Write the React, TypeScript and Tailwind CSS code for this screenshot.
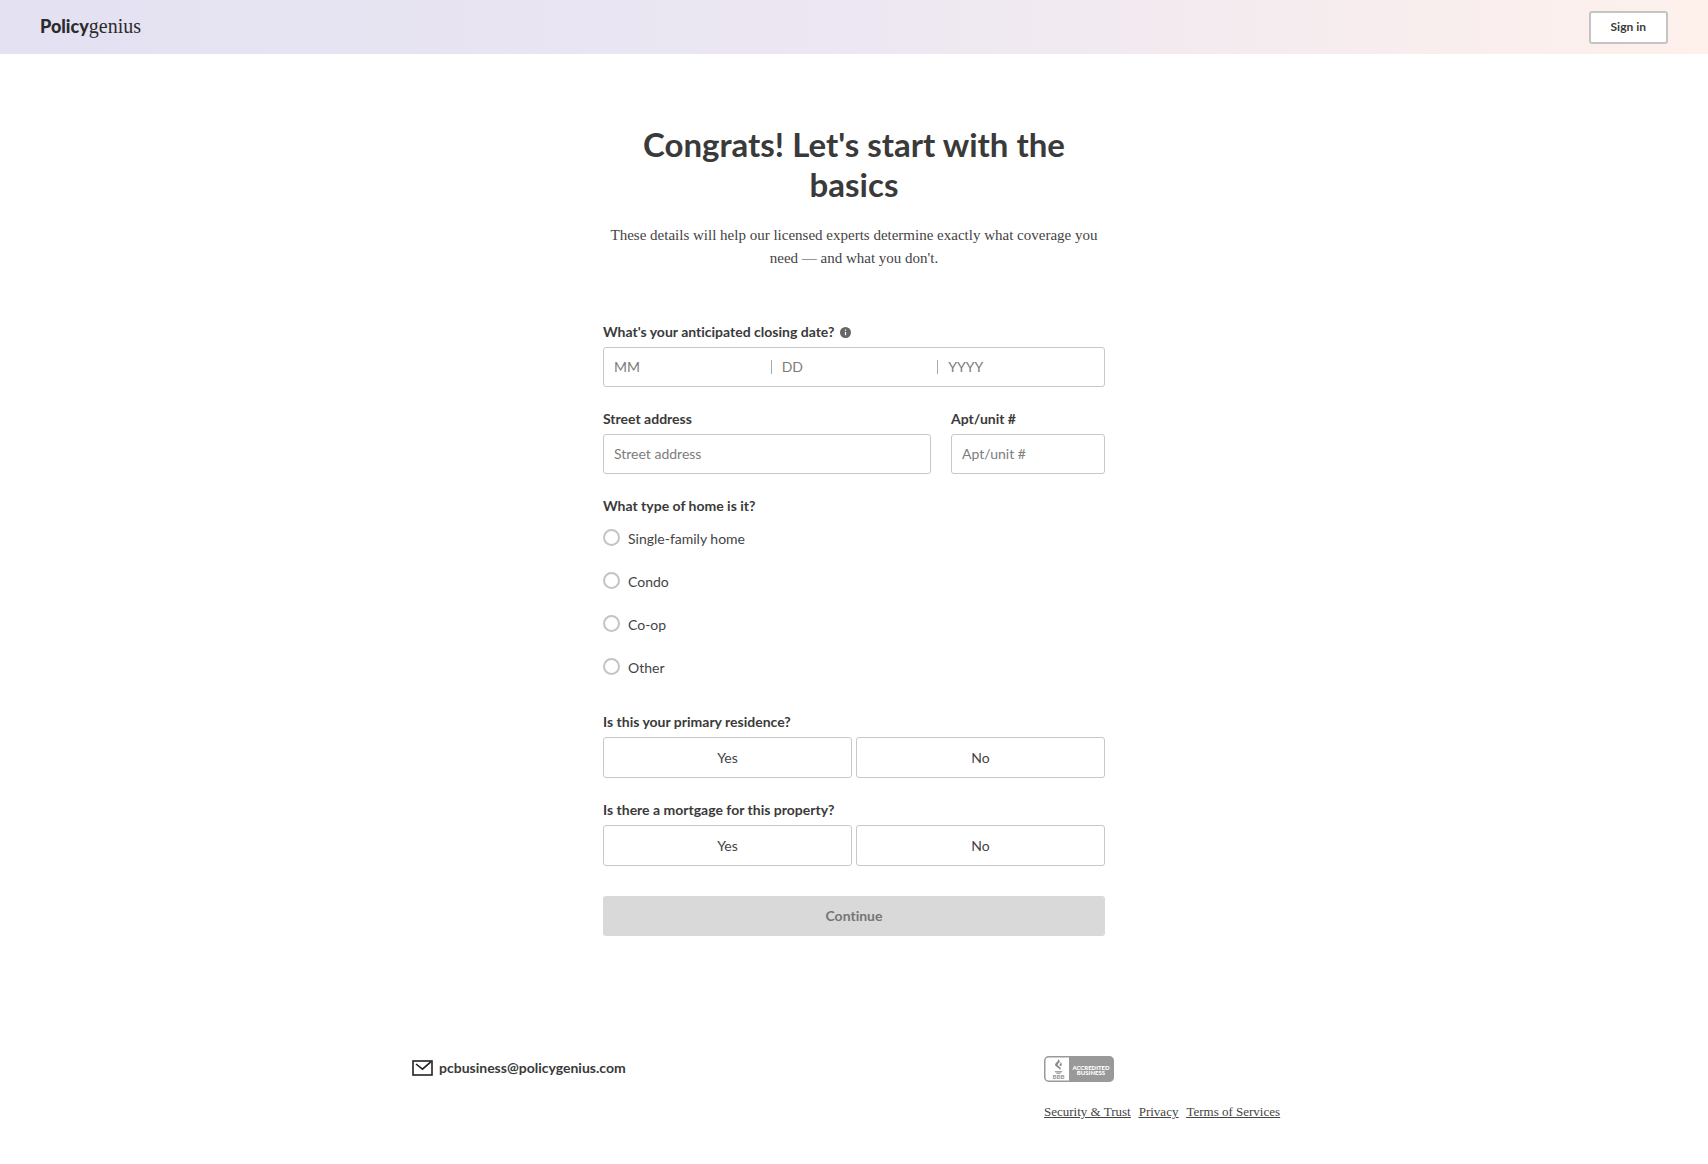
import { useState } from 'react';

const HOME_TYPES = ['Single-family home', 'Condo', 'Co-op', 'Other'];

const DATE_PARTS = [
  { name: 'month', placeholder: 'MM' },
  { name: 'day', placeholder: 'DD' },
  { name: 'year', placeholder: 'YYYY' },
];

const inputClass =
  'h-10 w-full rounded-[3px] border border-[#c8c8c8] bg-white px-2.5 pb-0.5 text-sm text-[#333] outline-none placeholder:text-[#7d7d7d]';

const labelClass = 'block text-sm leading-5 font-bold text-[#3a3a3a]';

function Header() {
  return (
    <header className="flex h-[54px] items-center justify-between bg-linear-to-r from-[#e3e1f2] via-[#ece7f2] via-50% to-[#fef1ec] px-10">
      <a href="#" aria-label="Policygenius" className="flex items-baseline pb-0.5 text-xl leading-6 text-[#2b2b2b]">
        <span className="font-['Lato'] text-lg font-black">Policy</span>
        <span className="font-['Liberation_Serif']">genius</span>
      </a>
      <button className="h-[33px] rounded-[3px] border-2 border-[#c4c4c4] bg-white px-5 text-xs font-bold text-[#3a3a3a]">
        Sign in
      </button>
    </header>
  );
}

function YesNo({ label }: { label: string }) {
  const [value, setValue] = useState('');

  return (
    <div role="group" aria-label={label}>
      <span className={labelClass}>{label}</span>
      <div className="mt-[5px] grid grid-cols-2 gap-1">
        {['Yes', 'No'].map((option) => (
          <button
            key={option}
            type="button"
            aria-pressed={value === option}
            onClick={() => setValue(option)}
            className="h-[41px] rounded-[3px] border border-[#c8c8c8] bg-white text-sm text-[#444] aria-pressed:border-[#333]"
          >
            {option}
          </button>
        ))}
      </div>
    </div>
  );
}

function BbbBadge() {
  return (
    <svg width="70" height="26" viewBox="0 0 70 26" role="img" aria-label="BBB Accredited Business">
      <rect x="0.75" y="0.75" width="68.5" height="24.5" rx="4" fill="#fff" stroke="#999" strokeWidth="1.5" />
      <path d="M25 0.5h40.5a4 4 0 0 1 4 4v17a4 4 0 0 1-4 4H25z" fill="#999" />
      {/* torch */}
      <path
        d="M14 3c2.400 1.800 2 3.200.3 4.600-1 .8-.9 1.600.2 2.400l1.700 1.300c.8.7.7 1.600-.3 2.700-.1-1-.6-1.500-1.600-2.100l-2-1.300c-1.700-1.200-1.600-2.700-.1-3.900C13.700 5.500 14.600 4.700 14 3z"
        fill="#888"
      />
      <path d="M16.400 6c1.900 1.500 1.900 2.900.4 4.200L15.300 9c1.100-.9 1.500-1.700 1.100-3z" fill="#888" />
      <path d="M10.500 15.200h8l-1.200 1.200h-5.600zM12.500 16.900h4v.8h-4z" fill="#888" />
      <text x="14.500" y="23" textAnchor="middle" fontSize="6" fontWeight="900" fill="#999" className="font-['Lato']">
        BBB
      </text>
      <text x="47" y="13.500" textAnchor="middle" fontSize="6" fontWeight="900" fill="#fff" className="font-['Lato']">
        ACCREDITED
      </text>
      <text x="47" y="19" textAnchor="middle" fontSize="6" fontWeight="900" fill="#fff" className="font-['Lato']">
        BUSINESS
      </text>
    </svg>
  );
}

function Footer() {
  return (
    <footer className="mx-auto flex w-full max-w-[884px] justify-between pt-[120px] pb-10">
      <a href="mailto:pcbusiness@policygenius.com" className="flex h-6 items-center gap-1.5 text-sm font-bold text-[#3a3a3a]">
        <svg width="21" height="16" viewBox="0 0 21 16" fill="none" stroke="#222" strokeWidth="1.600" aria-hidden="true">
          <rect x="1" y="1" width="19" height="14" />
          <path d="M4 4l6.500 5.200L18.800 1.800" />
        </svg>
        pcbusiness@policygenius.com
      </a>
      <div className="w-[252px]">
        <BbbBadge />
        <nav className="mt-5 flex gap-2 font-['Liberation_Serif'] text-[13px] leading-5 text-[#444] underline">
          <a href="#">Security &amp; Trust</a>
          <a href="#">Privacy</a>
          <a href="#">Terms of Services</a>
        </nav>
      </div>
    </footer>
  );
}

export default function App() {
  return (
    <div className="min-h-screen bg-white font-['Lato',sans-serif] text-[#3a3a3a] [font-variant-ligatures:none]">
      <Header />
      <main className="mx-auto w-full max-w-[502px] pt-[70px]">
        <h1 className="text-center text-[33px] leading-10 font-bold">Congrats! Let's start with the basics</h1>
        <p className="mt-5 text-center font-['Liberation_Serif'] text-[15px] leading-[23px] text-[#444]">
          These details will help our licensed experts determine exactly what coverage you need — and what you don't.
        </p>

        <form className="mt-[52px]" onSubmit={(e) => e.preventDefault()}>
          <div role="group" aria-labelledby="closing-date">
            <div className="flex items-center gap-1.5">
              <span id="closing-date" className={labelClass}>
                What's your anticipated closing date?
              </span>
              <svg width="11" height="11" viewBox="0 0 11 11" aria-hidden="true">
                <circle cx="5.500" cy="5.500" r="5.500" fill="#666" />
                <path d="M5.500 2.500v1.200M5.500 4.800v3.500" stroke="#fff" strokeWidth="1.200" />
              </svg>
            </div>
            <div className="mt-[5px] flex h-10 items-center rounded-[3px] border border-[#c8c8c8]">
              {DATE_PARTS.map((part, i) => (
                <div key={part.name} className="flex flex-1 items-center">
                  {i > 0 && <span className="h-3.5 w-px bg-[#aaa]" />}
                  <input
                    aria-label={part.name}
                    placeholder={part.placeholder}
                    className="w-full min-w-0 bg-transparent px-2.5 text-sm outline-none placeholder:text-[#7d7d7d]"
                  />
                </div>
              ))}
            </div>
          </div>

          <div className="mt-[22px] flex gap-5">
            <div className="flex-1">
              <label htmlFor="street" className={labelClass}>
                Street address
              </label>
              <input id="street" placeholder="Street address" className={`mt-[5px] ${inputClass}`} />
            </div>
            <div className="w-[154px]">
              <label htmlFor="unit" className={labelClass}>
                Apt/unit #
              </label>
              <input id="unit" placeholder="Apt/unit #" className={`mt-[5px] ${inputClass}`} />
            </div>
          </div>

          <fieldset className="mt-[22px]">
            <legend className={labelClass}>What type of home is it?</legend>
            <div className="mt-[13px] flex flex-col gap-[23px]">
              {HOME_TYPES.map((type) => (
                <label key={type} className="flex h-5 items-start gap-2 text-sm leading-5 text-[#444]">
                  <input
                    type="radio"
                    name="homeType"
                    value={type}
                    className="size-[17px] appearance-none rounded-full border-2 border-[#c4c4c4] bg-white checked:border-[5px] checked:border-[#333]"
                  />
                  {type}
                </label>
              ))}
            </div>
          </fieldset>

          <div className="mt-[34px] flex flex-col gap-[22px]">
            <YesNo label="Is this your primary residence?" />
            <YesNo label="Is there a mortgage for this property?" />
          </div>

          <button disabled className="mt-[30px] h-10 w-full rounded-[3px] bg-[#d9d9d9] text-sm font-bold text-[#757575]">
            Continue
          </button>
        </form>
      </main>
      <Footer />
    </div>
  );
}
